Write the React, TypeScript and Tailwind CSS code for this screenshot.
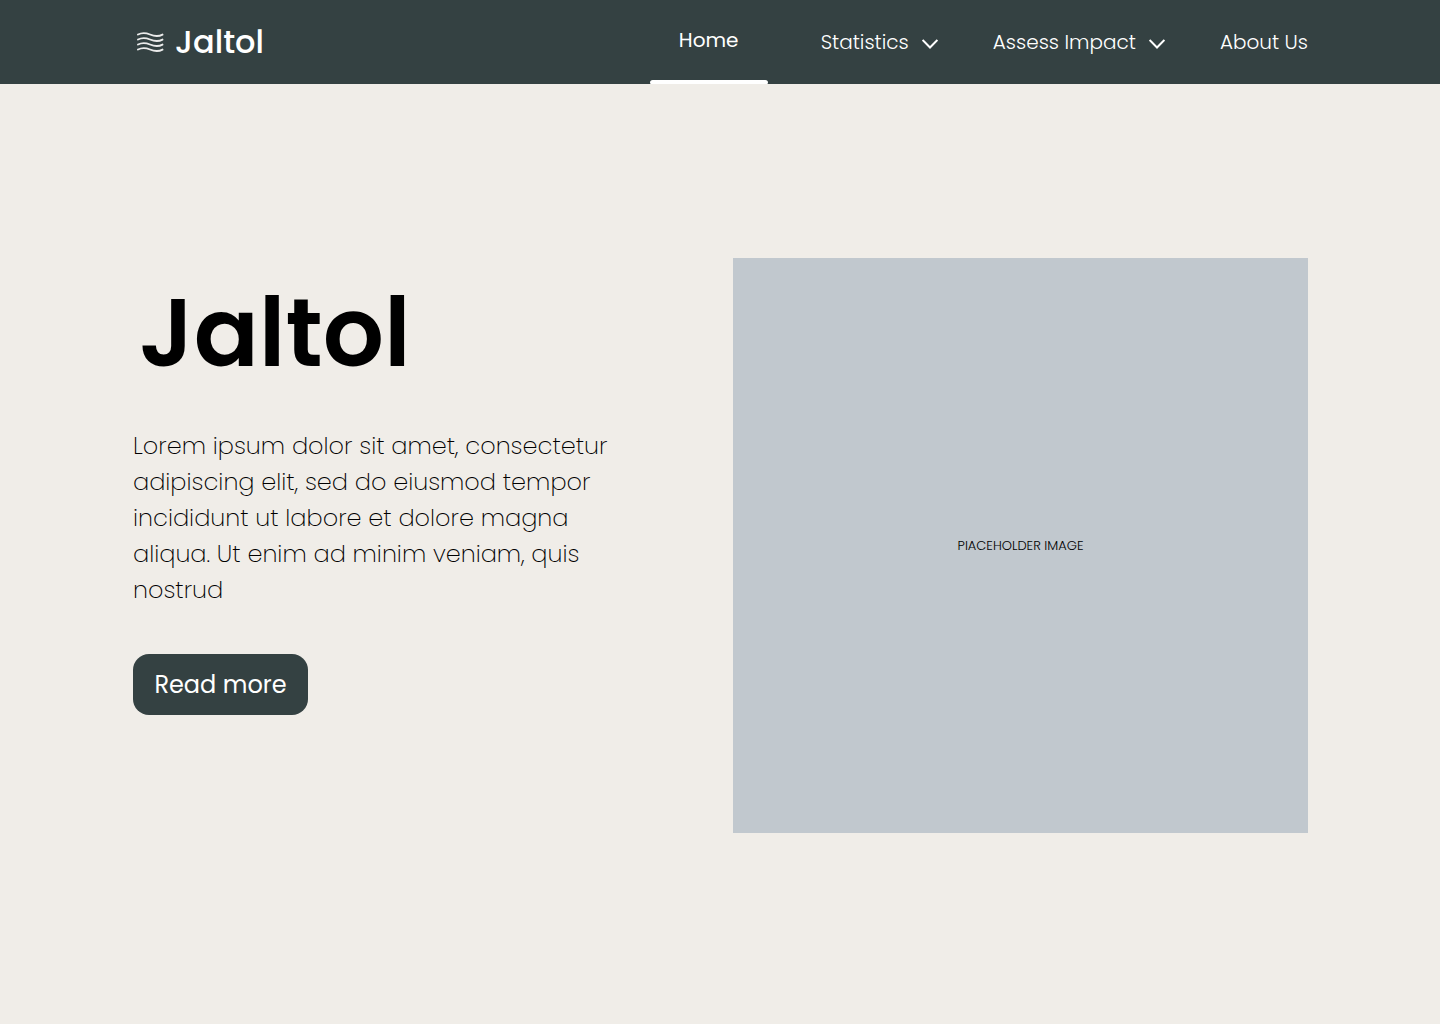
function Chevron() {
  return (
    <svg className="mt-1" width="16" height="10" viewBox="0 0 16 10" fill="none" stroke="currentColor" strokeWidth="2" aria-hidden="true">
      <path d="M.6 1l7.400 7.500L15.400 1" />
    </svg>
  );
}

function Waves() {
  return (
    <svg width="28" height="20" viewBox="0 0 28 20" fill="none" stroke="#ebebeb" strokeWidth="1.9" strokeLinecap="round" aria-hidden="true">
      {[3, 8, 13, 18].map((y) => (
        <path key={y} d={`M2 ${y - 0.5}C6 ${y - 2.6} 10 ${y - 2.2} 14 ${y - 0.5}S22.500 ${y + 1.8} 26.500 ${y - 0.4}`} />
      ))}
    </svg>
  );
}

export default function App() {
  return (
    <div className="min-h-screen bg-[#f0ede8] font-['Poppins','Inter',sans-serif] text-black">
      <header className="flex h-[84px] items-center justify-between bg-[#344142] pr-[132px] pl-[136px] text-white">
        <a href="#home" className="flex items-center gap-[11px]">
          <Waves />
          <span className="text-[32px] leading-10 font-medium">Jaltol</span>
        </a>
        <nav aria-label="Main" className="flex h-full items-center text-[20px] leading-[30px] font-light">
          <a href="#home" aria-current="page" className="mr-[53px] flex h-full w-[118px] flex-col items-center justify-between pt-[25px] font-normal">
            Home
            <span className="h-1 w-full rounded-t-sm rounded-b-xs bg-white" />
          </a>
          <button type="button" className="mr-[55px] flex items-center gap-[13px]">
            Statistics <Chevron />
          </button>
          <button type="button" className="mr-[55px] flex items-center gap-[13px]">
            Assess Impact <Chevron />
          </button>
          <a href="#about">About Us</a>
        </nav>
      </header>
      <main className="grid grid-cols-2 gap-[25px] pt-[174px] pr-[132px] pb-12 pl-[133px]">
        <section className="flex flex-col items-start pt-[3px]">
          <h1 className="pl-[6px] text-[96px] leading-[144px] font-semibold">Jaltol</h1>
          <p className="mt-[23px] max-w-[490px] font-['Poppins_ExtraLight','Poppins','Inter',sans-serif] text-[24px] leading-9 font-light">
            Lorem ipsum dolor sit amet, consectetur adipiscing elit, sed do eiusmod tempor incididunt ut labore et dolore magna aliqua. Ut enim ad minim veniam, quis nostrud
          </p>
          <button type="button" className="mt-[46px] h-[61px] w-[175px] rounded-2xl bg-[#344142] text-[24px] text-white">
            Read more
          </button>
        </section>
        <div role="img" aria-label="Placeholder image" className="flex aspect-square items-center justify-center bg-[#c1c8ce] text-[13px] font-light">
          PlACEHOLDER IMAGE
        </div>
      </main>
    </div>
  );
}
